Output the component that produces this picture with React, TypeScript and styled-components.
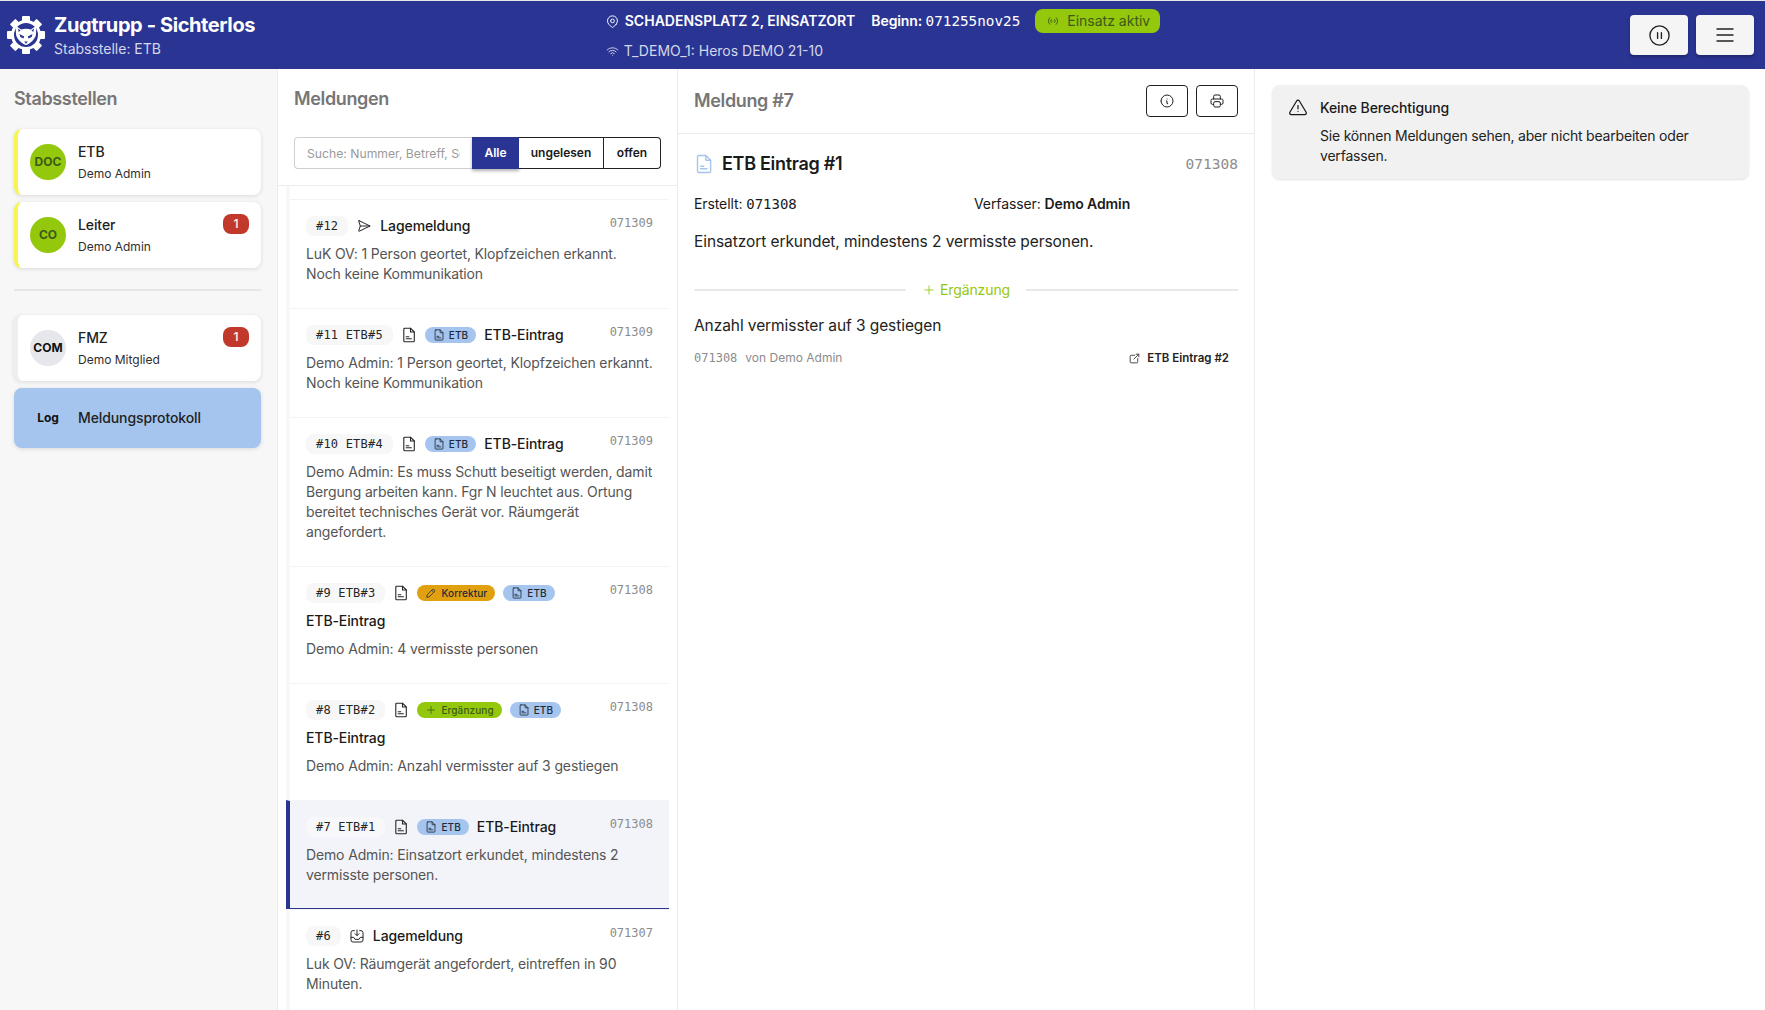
import React from 'react';
import styled, { createGlobalStyle } from 'styled-components';
import {
  TbAccessPoint,
  TbAlertTriangle,
  TbExternalLink,
  TbInfoCircle,
  TbMapPin,
  TbMenu2,
  TbPencil,
  TbPlus,
  TbPrinter,
  TbSend2,
  TbWifi,
} from 'react-icons/tb';
import { CirclePause } from 'lucide-react';

const NAVY = '#2a3593';
const GREEN = '#94c80c';
const SKY = '#a5c5ee';
const MONO = '"DejaVu Sans Mono", "Liberation Mono", monospace';

const GlobalStyle = createGlobalStyle`
  html, body {
    margin: 0;
    height: 100%;
    background: #fff;
    overflow: hidden;
  }
  body {
    font-family: Inter, "Noto Sans", sans-serif;
    font-size: 14px;
    line-height: 20px;
    letter-spacing: -0.1px;
    color: #1a1a1a;
  }
  * {
    box-sizing: border-box;
  }
`;

const Page = styled.div`
  height: 1010px;
  padding-top: 1px;
  display: flex;
  flex-direction: column;
  background: #e8e8e8;
`;

const Header = styled.header`
  height: 68px;
  flex: none;
  display: grid;
  grid-template-columns: 1fr auto 1fr;
  align-items: center;
  padding: 0 11px;
  background: ${NAVY};
  color: #fff;
`;

const Brand = styled.div`
  display: flex;
  align-items: center;
  gap: 9px;
  margin-left: -4px;
`;

const BrandTitle = styled.div`
  font-size: 20px;
  line-height: 26px;
  font-weight: 700;
  letter-spacing: -0.4px;
  margin-top: 1px;
`;

const BrandSub = styled.div`
  font-size: 14px;
  line-height: 20px;
  margin-top: 1px;
  letter-spacing: 0;
  color: #d4d7ea;
`;

const Incident = styled.div`
  display: flex;
  flex-direction: column;
  gap: 8px;
`;

const IncidentRow = styled.div`
  display: flex;
  align-items: center;
  height: 24px;
`;

const Place = styled.span`
  display: flex;
  align-items: center;
  gap: 5px;
  font-weight: 600;
  letter-spacing: 0;
  margin-right: 16px;
`;

const Begin = styled.span`
  font-weight: 600;
  margin-right: 15px;
`;

const Mono = styled.span<{ $size?: number }>`
  font-family: ${MONO};
  font-weight: 400;
  font-size: ${(p) => p.$size ?? 14}px;
  letter-spacing: 0;
`;

const ActivePill = styled.span`
  display: flex;
  align-items: center;
  gap: 7px;
  height: 24px;
  padding: 0 10px 0 11px;
  border-radius: 8px;
  background: ${GREEN};
  color: #3c5a18;
  letter-spacing: 0;
`;

const Network = styled.div`
  display: flex;
  align-items: center;
  gap: 4px;
  letter-spacing: 0;
  color: #d4d7ea;
`;

const HeaderActions = styled.div`
  display: flex;
  justify-content: flex-end;
  gap: 8px;
`;

const HeaderButton = styled.button`
  width: 58px;
  height: 40px;
  display: flex;
  align-items: center;
  justify-content: center;
  border: 0;
  border-radius: 4px;
  background: #f5f5f5;
  color: #222;
  box-shadow: 0 2px 3px rgba(0, 0, 0, 0.3);
  padding: 0;
`;

const Columns = styled.main`
  flex: 1;
  min-height: 0;
  display: grid;
  grid-template-columns: 278px 400px 577px 1fr;
  background: #fff;
`;

const Sidebar = styled.aside`
  padding: 18px 16px 0 14px;
  background: #f7f7f7;
  border-right: 1px solid #ececec;
`;

const PanelTitle = styled.h2`
  margin: 0;
  font-size: 18px;
  line-height: 24px;
  font-weight: 600;
  letter-spacing: -0.35px;
  color: #767676;
`;

const Stations = styled.div<{ $top?: number }>`
  display: flex;
  flex-direction: column;
  gap: 7px;
  margin-top: ${(p) => p.$top ?? 0}px;
`;

const Station = styled.div<{ $accent: string; $fill?: string; $height: number }>`
  position: relative;
  height: ${(p) => p.$height}px;
  display: flex;
  align-items: center;
  gap: 12px;
  padding: 0 12px;
  border-left: 4px solid ${(p) => p.$accent};
  border-radius: 8px;
  background: ${(p) => p.$fill ?? '#fff'};
  box-shadow: 0 1px 4px rgba(0, 0, 0, 0.12);
`;

const Avatar = styled.div<{ $bg: string; $fg: string }>`
  width: 36px;
  height: 36px;
  flex: none;
  display: flex;
  align-items: center;
  justify-content: center;
  border-radius: 50%;
  background: ${(p) => p.$bg};
  color: ${(p) => p.$fg};
  font-size: 12px;
  font-weight: 700;
  letter-spacing: 0;
`;

const StationText = styled.div`
  padding-top: 2px;
`;

const StationName = styled.div`
  font-weight: 500;
  line-height: 20px;
  color: #222;
`;

const StationUser = styled.div`
  font-size: 12px;
  line-height: 20px;
  margin-top: 2px;
  letter-spacing: 0;
  color: #2e2e2e;
`;

const CountBadge = styled.span`
  position: absolute;
  top: 12px;
  right: 12px;
  width: 26px;
  height: 20px;
  display: flex;
  align-items: center;
  justify-content: center;
  border-radius: 8px;
  background: #c0392b;
  color: #f8e6e4;
  font-size: 12px;
  font-weight: 600;
`;

const Rule = styled.hr`
  margin: 21px 0 24px;
  border: 0;
  height: 2px;
  background: #e6e6e6;
`;

const MessagesPanel = styled.section`
  min-height: 0;
  display: flex;
  flex-direction: column;
  overflow: hidden;
  border-right: 1px solid #ececec;
`;

const MessagesHead = styled.div`
  flex: none;
  padding: 18px 16px 16px;
  border-bottom: 1px solid #ececec;
`;

const Filters = styled.div`
  display: flex;
  height: 32px;
  margin-top: 26px;
`;

const Search = styled.input`
  flex: 1;
  min-width: 0;
  height: 32px;
  padding: 0 12px;
  border: 1px solid #cfcfcf;
  border-right: 0;
  border-radius: 4px 0 0 4px;
  background: #fff;
  font-family: inherit;
  font-size: 12.2px;
  outline: none;
  &::placeholder {
    color: #9a9a9a;
    opacity: 1;
  }
`;

const Segment = styled.button<{ $active?: boolean; $width: number; $last?: boolean }>`
  width: ${(p) => p.$width}px;
  flex: none;
  padding: 0 0 2px;
  border: 1px solid ${(p) => (p.$active ? NAVY : '#222')};
  border-left-width: ${(p) => (p.$active ? 1 : 0)}px;
  border-radius: ${(p) => (p.$last ? '0 4px 4px 0' : '0')};
  background: ${(p) => (p.$active ? NAVY : '#fff')};
  color: ${(p) => (p.$active ? '#fff' : '#1a1a1a')};
  box-shadow: ${(p) => (p.$active ? '0 2px 3px rgba(0, 0, 0, 0.3)' : 'none')};
  font-family: inherit;
  font-size: 12px;
  font-weight: 600;
`;

const MessageList = styled.div`
  flex: 1;
  min-height: 0;
  margin: 0 8px;
  padding-top: 13px;
  border-left: 4px solid #f8f8f8;
`;

const Message = styled.article<{ $selected?: boolean }>`
  padding: 16px 16px 24px;
  border-top: 1px solid ${(p) => (p.$selected ? '#f2f4f9' : '#f3f3f3')};
  ${(p) =>
    p.$selected &&
    `
    margin-left: -4px;
    border-left: 4px solid ${NAVY};
    background: #f2f4f9;
    box-shadow: inset 0 -1px 0 ${NAVY};
  `}
`;

const MessageHead = styled.div`
  display: flex;
  align-items: center;
  gap: 8px;
  height: 20px;
  color: #262626;
`;

const NumberChip = styled.span<{ $selected?: boolean }>`
  height: 20px;
  padding: 0 10px;
  display: flex;
  align-items: center;
  border-radius: 8px;
  background: ${(p) => (p.$selected ? '#f8f8fb' : '#f7f7f7')};
  font-family: ${MONO};
  font-size: 12px;
  letter-spacing: 0.2px;
  color: #262626;
  white-space: pre;
`;

const Tag = styled.span<{ $bg: string; $fg?: string }>`
  height: 16px;
  padding: 0 8px;
  display: flex;
  align-items: center;
  gap: 4px;
  border-radius: 8px;
  background: ${(p) => p.$bg};
  color: ${(p) => p.$fg ?? '#1f2a38'};
  font-size: 10px;
  font-weight: 500;
  letter-spacing: 0.1px;
  white-space: nowrap;
`;

const MessageTitle = styled.span<{ $ownRow?: boolean }>`
  display: block;
  font-weight: 500;
  line-height: 20px;
  color: #1a1a1a;
  ${(p) => p.$ownRow && 'margin-top: 8px;'}
`;

const Time = styled.span`
  margin-left: auto;
  align-self: flex-start;
  font-family: ${MONO};
  font-size: 12px;
  line-height: 14px;
  letter-spacing: 0;
  color: #8c8c8c;
`;

const MessageText = styled.p`
  margin: 8px 0 0;
  line-height: 20px;
  letter-spacing: -0.14px;
  color: #555;
`;

const DetailPanel = styled.section`
  border-right: 1px solid #ececec;
`;

const DetailHead = styled.div`
  height: 65px;
  display: flex;
  align-items: center;
  justify-content: space-between;
  padding: 0 16px;
  border-bottom: 1px solid #ececec;
`;

const DetailActions = styled.div`
  display: flex;
  gap: 8px;
`;

const OutlineButton = styled.button`
  width: 42px;
  height: 32px;
  display: flex;
  align-items: center;
  justify-content: center;
  padding: 0;
  border: 1px solid #222;
  border-radius: 4px;
  background: #fff;
  color: #222;
`;

const DetailBody = styled.div`
  padding: 17px 16px 0;
`;

const DetailTitleRow = styled.div`
  display: flex;
  align-items: center;
  gap: 8px;
  height: 26px;
  color: ${SKY};
`;

const DetailTitle = styled.h3`
  margin: 0;
  font-size: 18px;
  line-height: 26px;
  font-weight: 600;
  letter-spacing: -0.3px;
  color: #1a1a1a;
`;

const DetailTime = styled.span`
  margin-left: auto;
  font-family: ${MONO};
  font-size: 14.5px;
  letter-spacing: 0;
  color: #8c8c8c;
`;

const FactGrid = styled.div`
  display: grid;
  grid-template-columns: 1fr 1fr;
  gap: 16px;
  margin-top: 17px;
`;

const Author = styled.strong`
  font-weight: 600;
`;

const BodyText = styled.p<{ $top: number }>`
  margin: ${(p) => p.$top}px 0 0;
  font-size: 15.5px;
  line-height: 24px;
  letter-spacing: -0.08px;
  color: #222;
`;

const SectionDivider = styled.div`
  display: flex;
  align-items: center;
  gap: 16px;
  margin-top: 26px;
  height: 20px;
  color: ${GREEN};
  &::before,
  &::after {
    content: '';
    flex: 1;
    height: 2px;
    background: #e8e8e8;
  }
`;

const DividerLabel = styled.span`
  display: flex;
  align-items: center;
  gap: 4px;
`;

const Meta = styled.div`
  display: flex;
  align-items: center;
  gap: 8px;
  height: 20px;
  margin-top: 10px;
  font-size: 12px;
  letter-spacing: 0;
  color: #8c8c8c;
`;

const MetaTime = styled.span`
  font-family: ${MONO};
`;

const LinkedEntry = styled.span`
  margin-left: auto;
  margin-right: 9px;
  display: flex;
  align-items: center;
  gap: 6px;
  font-size: 11.5px;
  font-weight: 600;
  color: #222;
`;

const InfoPanel = styled.section`
  padding: 16px 16px 0 17px;
`;

const Notice = styled.div`
  display: flex;
  gap: 12px;
  padding: 13px 16px;
  border-radius: 8px;
  background: #f1f1f1;
  box-shadow: 0 1px 2px rgba(0, 0, 0, 0.12);
`;

const NoticeIcon = styled.div`
  flex: none;
  height: 20px;
  display: flex;
  align-items: center;
`;

const NoticeTitle = styled.div`
  font-weight: 500;
`;

const NoticeText = styled.div`
  margin-top: 8px;
  letter-spacing: -0.2px;
  color: #222;
`;

const LogoMark: React.FC = () => (
  <svg width="38" height="38" viewBox="0 0 38 38" aria-hidden>
    <g fill="#fff">
      {[0, 45, 90, 135, 180, 225, 270, 315].map((deg) => (
        <rect key={deg} x="15" y="0" width="8" height="8" rx="1" transform={`rotate(${deg} 19 19)`} />
      ))}
      <circle cx="19" cy="19" r="15" />
    </g>
    <circle cx="19" cy="19" r="12" fill={NAVY} />
    <path
      fill="#fff"
      d="M8.5 9.5l5.5 4c3.2-1 6.800-1 10 0l5.500-4-.6 9.500c-.8 3.800-5.600 8.800-9.900 10-4.300-1.200-9.100-6.200-9.900-10z"
    />
    <path fill={NAVY} d="M12.500 18l4.700 2.600-.7 1.800-3.200-1.400zM25.500 18l-4.700 2.600.7 1.800 3.200-1.400zM17.200 25.500h3.600L19 27.800zM11 12.500l2.500 2-1.800 1.500zM27 12.500l-2.500 2 1.800 1.500z" />
  </svg>
);

const FileIcon: React.FC<{ size: number }> = ({ size }) => (
  <svg width={size} height={size} viewBox="0 0 16 16" fill="none" stroke="currentColor" strokeWidth="1.1" strokeLinejoin="round" strokeLinecap="round" aria-hidden>
    <path d="M3.800 1.200h5.700L13.300 5v8.800a1 1 0 0 1-1 1H3.800a1 1 0 0 1-1-1V2.200a1 1 0 0 1 1-1z" />
    <path d="M9.500 1.200V5h3.800" />
    <path d="M5.200 11.800h5.200M5.200 9.800h2.600" />
  </svg>
);

const TrayIcon: React.FC = () => (
  <svg width="16" height="16" viewBox="0 0 24 24" fill="none" stroke="currentColor" strokeWidth="1.5" strokeLinecap="round" strokeLinejoin="round" aria-hidden>
    <path d="M8 4H6a3 3 0 0 0-3 3v11a3 3 0 0 0 3 3h12a3 3 0 0 0 3-3V7a3 3 0 0 0-3-3h-2" />
    <path d="M3 14h4l2 3h6l2-3h4" />
    <path d="M12 3v8M9 8.500l3 3 3-3" />
  </svg>
);

type Entry = {
  id: string;
  kind: 'send' | 'file' | 'tray';
  fix?: 'Korrektur' | 'Ergänzung';
  etb?: boolean;
  title: string;
  time: string;
  text: string;
  selected?: boolean;
};

const entries: Entry[] = [
  { id: '#12', kind: 'send', title: 'Lagemeldung', time: '071309', text: 'LuK OV: 1 Person geortet, Klopfzeichen erkannt. Noch keine Kommunikation' },
  { id: '#11 ETB#5', kind: 'file', etb: true, title: 'ETB-Eintrag', time: '071309', text: 'Demo Admin: 1 Person geortet, Klopfzeichen erkannt. Noch keine Kommunikation' },
  { id: '#10 ETB#4', kind: 'file', etb: true, title: 'ETB-Eintrag', time: '071309', text: 'Demo Admin: Es muss Schutt beseitigt werden, damit Bergung arbeiten kann. Fgr N leuchtet aus. Ortung bereitet technisches Gerät vor. Räumgerät angefordert.' },
  { id: '#9 ETB#3', kind: 'file', fix: 'Korrektur', etb: true, title: 'ETB-Eintrag', time: '071308', text: 'Demo Admin: 4 vermisste personen' },
  { id: '#8 ETB#2', kind: 'file', fix: 'Ergänzung', etb: true, title: 'ETB-Eintrag', time: '071308', text: 'Demo Admin: Anzahl vermisster auf 3 gestiegen' },
  { id: '#7 ETB#1', kind: 'file', etb: true, title: 'ETB-Eintrag', time: '071308', text: 'Demo Admin: Einsatzort erkundet, mindestens 2 vermisste personen.', selected: true },
  { id: '#6', kind: 'tray', title: 'Lagemeldung', time: '071307', text: 'Luk OV: Räumgerät angefordert, eintreffen in 90 Minuten.' },
];

const KindIcon: React.FC<{ kind: Entry['kind'] }> = ({ kind }) => {
  if (kind === 'send') return <TbSend2 size={16} strokeWidth={1.5} />;
  if (kind === 'tray') return <TrayIcon />;
  return <FileIcon size={16} />;
};

const MessageRow: React.FC<{ entry: Entry }> = ({ entry }) => (
  <Message $selected={entry.selected}>
    <MessageHead>
      <NumberChip $selected={entry.selected}>{entry.id}</NumberChip>
      <KindIcon kind={entry.kind} />
      {entry.fix === 'Korrektur' && (
        <Tag $bg="#e0a00f">
          <TbPencil size={12} strokeWidth={1.5} />
          Korrektur
        </Tag>
      )}
      {entry.fix === 'Ergänzung' && (
        <Tag $bg={GREEN} $fg="#3c5a18">
          <TbPlus size={12} strokeWidth={1.5} />
          Ergänzung
        </Tag>
      )}
      {entry.etb && (
        <Tag $bg={SKY}>
          <FileIcon size={12} />
          ETB
        </Tag>
      )}
      {!entry.fix && <MessageTitle>{entry.title}</MessageTitle>}
      <Time>{entry.time}</Time>
    </MessageHead>
    {entry.fix && <MessageTitle $ownRow>{entry.title}</MessageTitle>}
    <MessageText>{entry.text}</MessageText>
  </Message>
);

export default function App() {
  return (
    <Page>
      <GlobalStyle />
      <Header>
        <Brand>
          <LogoMark />
          <div>
            <BrandTitle>Zugtrupp - Sichterlos</BrandTitle>
            <BrandSub>Stabsstelle: ETB</BrandSub>
          </div>
        </Brand>
        <Incident>
          <IncidentRow>
            <Place>
              <TbMapPin size={15} strokeWidth={1.5} />
              SCHADENSPLATZ 2, EINSATZORT
            </Place>
            <Begin>
              Beginn: <Mono $size={14.3}>071255nov25</Mono>
            </Begin>
            <ActivePill>
              <TbAccessPoint size={14} strokeWidth={1.5} />
              Einsatz aktiv
            </ActivePill>
          </IncidentRow>
          <Network>
            <TbWifi size={15} strokeWidth={1.5} />
            T_DEMO_1: Heros DEMO 21-10
          </Network>
        </Incident>
        <HeaderActions>
          <HeaderButton aria-label="Pause">
            <CirclePause size={23} strokeWidth={1.4} />
          </HeaderButton>
          <HeaderButton aria-label="Menü">
            <TbMenu2 size={24} strokeWidth={1.4} />
          </HeaderButton>
        </HeaderActions>
      </Header>

      <Columns>
        <Sidebar>
          <PanelTitle>Stabsstellen</PanelTitle>
          <Stations $top={18}>
            <Station $accent="#f6f64e" $height={66}>
              <Avatar $bg={GREEN} $fg="#3c5a18">DOC</Avatar>
              <StationText>
                <StationName>ETB</StationName>
                <StationUser>Demo Admin</StationUser>
              </StationText>
            </Station>
            <Station $accent="#f6f64e" $height={66}>
              <Avatar $bg={GREEN} $fg="#3c5a18">CO</Avatar>
              <StationText>
                <StationName>Leiter</StationName>
                <StationUser>Demo Admin</StationUser>
              </StationText>
              <CountBadge>1</CountBadge>
            </Station>
          </Stations>
          <Rule />
          <Stations>
            <Station $accent="#efefef" $height={66}>
              <Avatar $bg="#e5e7eb" $fg="#111">COM</Avatar>
              <StationText>
                <StationName>FMZ</StationName>
                <StationUser>Demo Mitglied</StationUser>
              </StationText>
              <CountBadge>1</CountBadge>
            </Station>
            <Station $accent={SKY} $fill={SKY} $height={60}>
              <Avatar $bg="transparent" $fg="#111">Log</Avatar>
              <StationName>Meldungsprotokoll</StationName>
            </Station>
          </Stations>
        </Sidebar>

        <MessagesPanel>
          <MessagesHead>
            <PanelTitle>Meldungen</PanelTitle>
            <Filters>
              <Search placeholder="Suche: Nummer, Betreff, Sender" readOnly />
              <Segment $active $width={47}>Alle</Segment>
              <Segment $width={85}>ungelesen</Segment>
              <Segment $width={57} $last>offen</Segment>
            </Filters>
          </MessagesHead>
          <MessageList>
            {entries.map((entry) => (
              <MessageRow key={entry.id} entry={entry} />
            ))}
          </MessageList>
        </MessagesPanel>

        <DetailPanel>
          <DetailHead>
            <PanelTitle>Meldung #7</PanelTitle>
            <DetailActions>
              <OutlineButton aria-label="Info">
                <TbInfoCircle size={16} strokeWidth={1.5} />
              </OutlineButton>
              <OutlineButton aria-label="Drucken">
                <TbPrinter size={16} strokeWidth={1.5} />
              </OutlineButton>
            </DetailActions>
          </DetailHead>
          <DetailBody>
            <DetailTitleRow>
              <FileIcon size={20} />
              <DetailTitle>ETB Eintrag #1</DetailTitle>
              <DetailTime>071308</DetailTime>
            </DetailTitleRow>
            <FactGrid>
              <span>
                Erstellt: <Mono>071308</Mono>
              </span>
              <span>
                Verfasser: <Author>Demo Admin</Author>
              </span>
            </FactGrid>
            <BodyText $top={16}>Einsatzort erkundet, mindestens 2 vermisste personen.</BodyText>
            <SectionDivider>
              <DividerLabel>
                <TbPlus size={14} strokeWidth={1.5} />
                Ergänzung
              </DividerLabel>
            </SectionDivider>
            <BodyText $top={14}>Anzahl vermisster auf 3 gestiegen</BodyText>
            <Meta>
              <MetaTime>071308</MetaTime>
              von Demo Admin
              <LinkedEntry>
                <TbExternalLink size={13} strokeWidth={1.5} />
                ETB Eintrag #2
              </LinkedEntry>
            </Meta>
          </DetailBody>
        </DetailPanel>

        <InfoPanel>
          <Notice>
            <NoticeIcon>
              <TbAlertTriangle size={20} strokeWidth={1.5} />
            </NoticeIcon>
            <div>
              <NoticeTitle>Keine Berechtigung</NoticeTitle>
              <NoticeText>Sie können Meldungen sehen, aber nicht bearbeiten oder verfassen.</NoticeText>
            </div>
          </Notice>
        </InfoPanel>
      </Columns>
    </Page>
  );
}
